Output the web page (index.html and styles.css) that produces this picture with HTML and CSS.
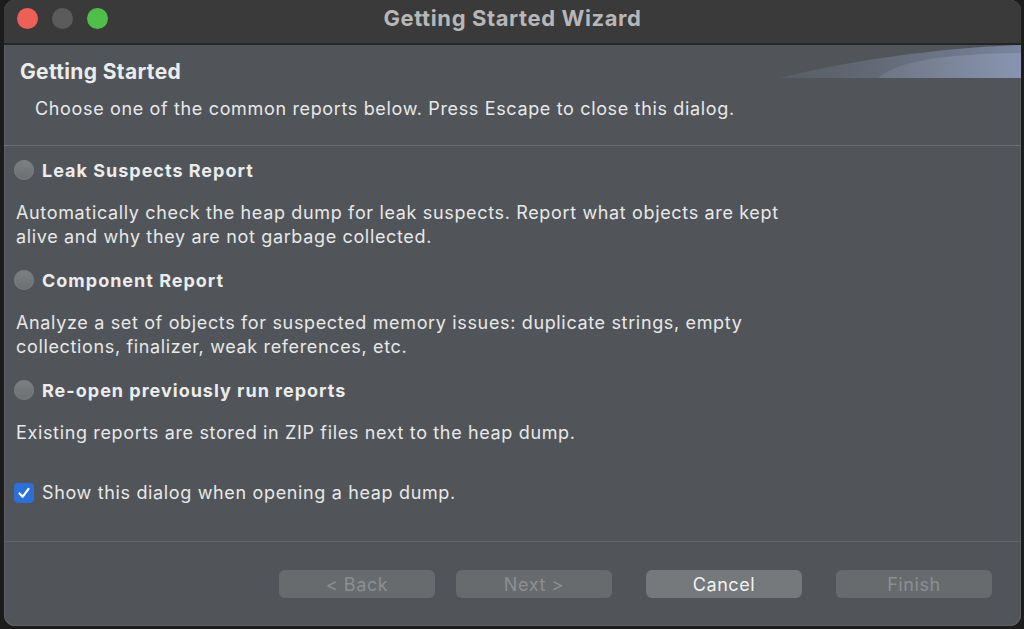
FILE: index.html
```html
<!DOCTYPE html>
<html>
<head>
<meta charset="utf-8">
<link rel="stylesheet" href="styles.css">
</head>
<body>
<div class="window">
  <div class="titlebar">
    <div class="lights">
      <span class="light red"></span>
      <span class="light gray"></span>
      <span class="light green"></span>
    </div>
    <div class="wtitle">Getting Started Wizard</div>
    <div></div>
  </div>
  <div class="header">
    <svg class="swoosh" width="241" height="33" viewBox="0 0 241 33" preserveAspectRatio="none">
      <defs>
        <linearGradient id="g1" x1="0" y1="0" x2="1" y2="0">
          <stop offset="0" stop-color="#6a7280" stop-opacity="0.3"/>
          <stop offset="1" stop-color="#7e8aa6" stop-opacity="0.9"/>
        </linearGradient>
        <linearGradient id="g2" x1="0" y1="0" x2="1" y2="0">
          <stop offset="0" stop-color="#7a8290" stop-opacity="0.45"/>
          <stop offset="1" stop-color="#8894b0" stop-opacity="1"/>
        </linearGradient>
      </defs>
      <path d="M0 33 C 50 20, 140 4, 241 0 L241 33 Z" fill="url(#g1)"/>
      <path d="M98 33 C 120 14, 175 9, 241 8 L241 33 Z" fill="url(#g2)"/>
    </svg>
    <div class="htitle">Getting Started</div>
    <div class="hdesc">Choose one of the common reports below. Press Escape to close this dialog.</div>
  </div>
  <div class="content">
    <div class="option">
      <span class="radio"></span><span class="olabel">Leak Suspects Report</span>
    </div>
    <p class="odesc">Automatically check the heap dump for leak suspects. Report what objects are kept<br>alive and why they are not garbage collected.</p>
    <div class="option">
      <span class="radio"></span><span class="olabel">Component Report</span>
    </div>
    <p class="odesc">Analyze a set of objects for suspected memory issues: duplicate strings, empty<br>collections, finalizer, weak references, etc.</p>
    <div class="option">
      <span class="radio"></span><span class="olabel">Re-open previously run reports</span>
    </div>
    <p class="odesc">Existing reports are stored in ZIP files next to the heap dump.</p>
    <div class="check">
      <span class="box"><svg width="14" height="14" viewBox="0 0 14 14"><path d="M2.5 7.5 L5.6 10.8 L11.5 2.8" fill="none" stroke="#fff" stroke-width="2.2" stroke-linecap="round" stroke-linejoin="round"/></svg></span>
      <span class="clabel">Show this dialog when opening a heap dump.</span>
    </div>
  </div>
  <div class="footer">
    <button class="btn disabled">&lt; Back</button>
    <button class="btn disabled">Next &gt;</button>
    <button class="btn cancel">Cancel</button>
    <button class="btn disabled">Finish</button>
  </div>
</div>
</body>
</html>
```

FILE: styles.css
```css
html, body {
  margin: 0;
  padding: 0;
  background: #1c1c1c;
  width: 1024px;
  height: 629px;
  overflow: hidden;
  font-family: Inter, "Noto Sans", sans-serif;
}

.window {
  margin-left: 4px;
  width: 1017px;
  height: 626px;
  border-radius: 11px;
  overflow: hidden;
  background: #515559;
  display: flex;
  flex-direction: column;
  box-shadow: inset 0 0 0 1px #5c6064;
}

.titlebar {
  height: 45px;
  box-sizing: border-box;
  padding-bottom: 7px;
  background: #3a3a3a;
  border-bottom: 2px solid #262626;
  display: grid;
  grid-template-columns: 1fr auto 1fr;
  align-items: center;
  flex-shrink: 0;
}

.lights {
  display: flex;
  gap: 14px;
  padding-left: 13px;
}

.light {
  width: 21px;
  height: 21px;
  border-radius: 50%;
  display: block;
}
.red { background: #ee5f57; }
.gray { background: #5b5b5b; }
.green { background: #4fbf4a; }

.wtitle {
  color: #b7b7b7;
  font-weight: 700;
  font-size: 22px;
  letter-spacing: 0.6px;
}

.header {
  position: relative;
  height: 101px;
  box-sizing: border-box;
  border-bottom: 1px solid #6a6e72;
  flex-shrink: 0;
}

.swoosh {
  position: absolute;
  right: 0;
  top: 0;
}

.htitle {
  position: relative;
  color: #ececec;
  font-weight: 700;
  font-size: 21px;
  letter-spacing: 0.35px;
  padding: 14px 0 0 16px;
}

.hdesc {
  position: relative;
  color: #e8e8e8;
  font-size: 18px;
  letter-spacing: 0.65px;
  padding: 14px 0 0 31px;
}

.content {
  padding: 12px 0 0 10px;
  color: #e8e8e8;
  font-size: 18px;
  letter-spacing: 0.65px;
  height: 396px;
  border-bottom: 1px solid #62666a;
  box-sizing: border-box;
  flex-shrink: 0;
}

.option {
  display: flex;
  align-items: center;
  height: 24px;
}

.radio {
  width: 20px;
  height: 20px;
  border-radius: 50%;
  background: linear-gradient(#7e8184, #6c6f72);
  box-shadow: inset 0 0 0 1px #777a7d;
  margin-right: 8px;
  flex-shrink: 0;
}

.olabel {
  font-weight: 700;
  letter-spacing: 1px;
  color: #ececec;
}

.odesc {
  margin: 19px 0 19px 2px;
  line-height: 24px;
}

.check {
  display: flex;
  align-items: center;
  margin-top: 37px;
}

.box {
  width: 20px;
  height: 20px;
  border-radius: 4px;
  background: #2c6fd8;
  display: flex;
  align-items: center;
  justify-content: center;
  margin-right: 8px;
  flex-shrink: 0;
}

.footer {
  display: flex;
  padding: 28px 0 0 275px;
  gap: 21px;
}

.btn {
  width: 156px;
  height: 28px;
  border: none;
  border-radius: 6px;
  font-family: inherit;
  font-size: 18px;
  letter-spacing: 0.6px;
  padding: 0;
}

.btn.disabled {
  background: #676b6e;
  color: #8c8f92;
}

.btn.cancel {
  background: #75797c;
  color: #f2f2f2;
  margin-left: 13px;
  margin-right: 13px;
}
```
